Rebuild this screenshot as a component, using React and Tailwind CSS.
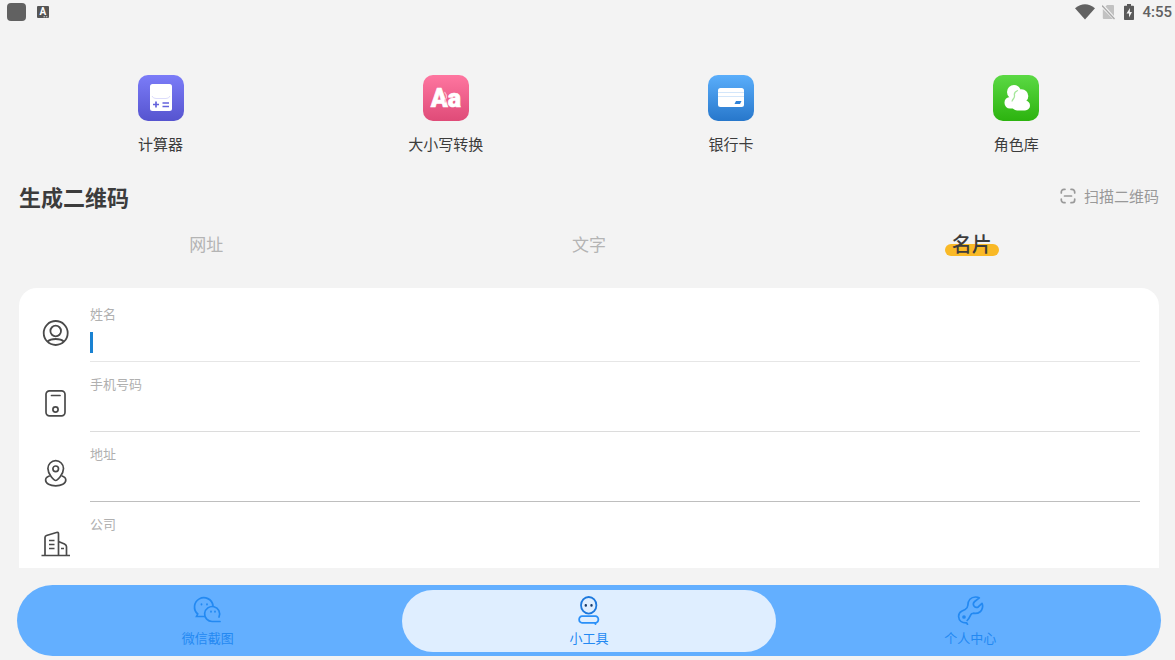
import { useState } from "react";

const CalculatorIcon = () => (
  <svg viewBox="0 0 46 46" className="w-[46px] h-[46px]" aria-hidden="true">
    <defs>
      <linearGradient id="calc" x1="0" y1="0" x2="0" y2="1">
        <stop offset="0" stopColor="#7b7cf8" />
        <stop offset="1" stopColor="#5654cf" />
      </linearGradient>
    </defs>
    <rect width="46" height="46" rx="10" fill="url(#calc)" />
    <rect x="12" y="9" width="22" height="27" rx="2.5" fill="#fff" />
    <path d="M14 21q1 2.5 4 2.5h10q3 0 4-2.5" fill="none" stroke="#dcdcfb" strokeWidth="1" />
    <path d="M18 26.500v6M15 29.500h6M24.500 28h6.500M24.500 31.500h6.500" stroke="#6463dc" strokeWidth="1.700" />
  </svg>
);

const CaseIcon = () => (
  <svg viewBox="0 0 46 46" className="w-[46px] h-[46px]" aria-hidden="true">
    <defs>
      <linearGradient id="case" x1="0" y1="0" x2="0" y2="1">
        <stop offset="0" stopColor="#fe76a0" />
        <stop offset="1" stopColor="#df4b78" />
      </linearGradient>
    </defs>
    <rect width="46" height="46" rx="10" fill="url(#case)" />
    <text
      x="23"
      y="32"
      textAnchor="middle"
      fill="#fff"
      stroke="#fff"
      strokeWidth=".6"
      className="font-[Roboto,sans-serif] font-black text-[25px]"
    >
      Aa
    </text>
    <path d="M21.500 17q2.500 3 2 5.500-2 2-1.200 5" fill="none" stroke="#fbb5ca" strokeWidth="1.200" />
  </svg>
);

const CardIcon = () => (
  <svg viewBox="0 0 46 46" className="w-[46px] h-[46px]" aria-hidden="true">
    <defs>
      <linearGradient id="bank" x1="0" y1="0" x2="0" y2="1">
        <stop offset="0" stopColor="#5aaefb" />
        <stop offset="1" stopColor="#2777cb" />
      </linearGradient>
    </defs>
    <rect width="46" height="46" rx="10" fill="url(#bank)" />
    <rect x="10" y="13" width="26" height="19" rx="2.500" fill="#fff" />
    <path d="M10 17.500h26M10 21.500h26" stroke="#d3e6fa" strokeWidth="1" />
    <path d="M28 26h5.500l-1.500 3h-5.500z" fill="#2f82d8" />
  </svg>
);

const RolesIcon = () => (
  <svg viewBox="0 0 46 46" className="w-[46px] h-[46px]" aria-hidden="true">
    <defs>
      <linearGradient id="roles" x1="0" y1="0" x2="0" y2="1">
        <stop offset="0" stopColor="#5bd944" />
        <stop offset="1" stopColor="#2cb30f" />
      </linearGradient>
    </defs>
    <rect width="46" height="46" rx="10" fill="url(#roles)" />
    <g fill="#fff">
      <circle cx="21" cy="17" r="7" />
      <rect x="11.500" y="22" width="16" height="11.500" rx="5.500" />
      <circle cx="28.500" cy="21" r="6.800" />
      <rect x="19" y="25.500" width="18" height="10" rx="5" />
      <path d="M17 21h10v12H17zM24 24h9v5h-9z" />
    </g>
    <path d="M25 15.500c-3 1-4 3-3.500 5 .5 3-2 3-2.500 6" fill="none" stroke="#a5e79b" strokeWidth="1.300" />
  </svg>
);

const PersonIcon = () => (
  <svg viewBox="0 0 28 28" className="w-7 h-7" fill="none" stroke="#4a4a4a" strokeWidth="1.800" aria-hidden="true">
    <circle cx="13.700" cy="14" r="12" />
    <circle cx="13.700" cy="12" r="5.300" />
    <path d="M5.700 22.500q2.500-2.500 8-2.500t8 2.500" />
  </svg>
);

const PhoneIcon = () => (
  <svg viewBox="0 0 28 28" className="w-7 h-7" fill="none" stroke="#4a4a4a" strokeWidth="1.700" aria-hidden="true">
    <rect x="4" y="1.800" width="19" height="25" rx="3.500" />
    <path d="M9.500 6.500h8.500" strokeLinecap="round" />
    <circle cx="13.500" cy="20.500" r="2.600" />
  </svg>
);

const PlaceIcon = () => (
  <svg viewBox="0 0 28 28" className="w-7 h-7" fill="none" stroke="#4a4a4a" strokeWidth="1.700" aria-hidden="true">
    <path d="M13.700 21.500c-1.500 0-7.800-6-7.800-12a7.800 7.800 0 0 1 15.600 0c0 6-6.300 12-7.800 12z" />
    <circle cx="13.700" cy="9.800" r="2.800" />
    <path d="M7.800 16.800c-3 1-4.200 2.500-4.200 4.200 0 3.500 4.500 5.800 10.100 5.800s10.100-2.300 10.100-5.800c0-1.700-1.200-3.200-4.200-4.200" />
  </svg>
);

const CompanyIcon = () => (
  <svg viewBox="0 0 28 28" className="w-7 h-7 overflow-visible" fill="none" stroke="#4a4a4a" strokeWidth="1.700" strokeLinejoin="round" aria-hidden="true">
    <path d="M-.5 26.500h28.500M3 26V8.500q0-1.500 1.500-2l10-3q2-.5 2 1.300V26M16.500 12.500l6 2.500q2 1 2 2.800V26" />
    <path d="M7 11.500h5.500M7 15.500h5.500M7 19.500h5.500M19 19.500h3" />
  </svg>
);

const ScanIcon = () => (
  <svg viewBox="0 0 16 16" className="w-4 h-4" fill="none" stroke="currentColor" strokeWidth="1.700" strokeLinecap="round" aria-hidden="true">
    <path d="M1.300 5V4A2.700 2.700 0 0 1 4 1.300H5M11 1.300h1A2.700 2.700 0 0 1 14.700 4v1M14.700 11v1a2.700 2.700 0 0 1-2.700 2.700H11M5 14.700H4A2.700 2.700 0 0 1 1.300 12v-1M4.500 8h7" />
  </svg>
);

const ChatIcon = () => (
  <svg viewBox="0 0 30 30" className="w-[30px] h-[30px]" fill="none" stroke="currentColor" strokeWidth="1.700" strokeLinecap="round" aria-hidden="true">
    <path d="M11 21.500H3.500l1.200-2.500A9.300 9.300 0 1 1 20 10.500" />
    <path d="M26 22A7.500 7.500 0 1 0 19.500 26.500h7.500" />
    <path d="M8.500 9.200v.4M14 9.200v.4M18 16.500v.3M22 16.500v.3" strokeWidth="1.800" />
  </svg>
);

const RobotIcon = () => (
  <svg viewBox="0 0 30 30" className="w-[30px] h-[30px]" fill="none" stroke="#1c78dd" strokeWidth="1.800" strokeLinecap="round" aria-hidden="true">
    <ellipse cx="14.700" cy="10.300" rx="7.700" ry="8.300" />
    <path d="M21.500 29l-.6-1.200H8A2.800 2.800 0 0 1 5.200 25v-1A2.800 2.800 0 0 1 8 21.200h13.500a2.800 2.800 0 0 1 2.800 2.800v1a2.800 2.800 0 0 1-1.800 2.600" stroke="#2b90f8" />
    <path d="M11.800 10.300v.2M17.500 10.300v.2" stroke="#183a68" strokeWidth="2.400" />
  </svg>
);

const WrenchIcon = () => (
  <svg viewBox="0 0 30 30" className="w-[30px] h-[30px]" fill="none" stroke="currentColor" strokeWidth="1.700" strokeLinecap="round" strokeLinejoin="round" aria-hidden="true">
    <path d="M12.500 29.300l-.8-1.500C7 28 3.800 25.500 3.600 21.500c0-2.500 1-4.300 3-5.300l3.500-1.700c1.800-1 2.500-2 2.700-4C13 5.500 15.800 2 20.500 2c1.800 0 3 .3 3.800.9l-4.600 3.600c-1.500 1.300-1.700 3-.7 4.500 1.200 1.700 3 1.800 4.500.7l3.500-3.400c.7 1.500.8 3.200.3 4.900-1 3.800-4.300 5.500-8.800 5l-2 .6c-1.500 1.500-1.500 4-4.300 6.700" />
    <circle cx="9" cy="22" r="1" fill="currentColor" />
  </svg>
);

const tools = [
  { name: "计算器", icon: <CalculatorIcon /> },
  { name: "大小写转换", icon: <CaseIcon /> },
  { name: "银行卡", icon: <CardIcon /> },
  { name: "角色库", icon: <RolesIcon /> },
];

const tabs = ["网址", "文字", "名片"];

const fields = [
  { id: "name", label: "姓名", icon: <PersonIcon />, line: "border-[#e6e6e6]" },
  { id: "phone", label: "手机号码", icon: <PhoneIcon />, line: "border-[#dcdcdc]" },
  { id: "address", label: "地址", icon: <PlaceIcon />, line: "border-[#bebebe]" },
  { id: "company", label: "公司", icon: <CompanyIcon />, line: "border-[#dcdcdc]" },
];

const navItems = [
  { name: "微信截图", icon: <ChatIcon /> },
  { name: "小工具", icon: <RobotIcon /> },
  { name: "个人中心", icon: <WrenchIcon /> },
];

const StatusBar = () => (
  <div className="flex items-center justify-between h-6 pl-[7px] pr-[3px] text-[#616161]">
    <div className="flex items-center gap-[11px]">
      <span className="w-[19px] h-[18px] rounded bg-[#616161]" />
      <svg viewBox="0 0 12 12" className="w-3 h-3" aria-hidden="true">
        <rect width="12" height="12" rx="1" fill="#555" />
        <text x="2.500" y="9" fill="#fff" className="font-[Roboto,sans-serif] font-bold text-[10px]">A</text>
        <path d="M6.500 10.800h4" stroke="#ddd" strokeWidth="1" strokeDasharray="1.500 .8" />
      </svg>
    </div>
    <div className="flex items-center gap-[7px]">
      <svg viewBox="0 0 20 16" className="w-5 h-4" aria-hidden="true">
        <path d="M0 4.200Q10-3.600 20 4.200L10 15.500z" fill="#616161" />
      </svg>
      <svg viewBox="0 0 14 16" className="w-[14px] h-4" aria-hidden="true">
        <path d="M5 1h6q1 0 1 1v10L3.500 2.500zM.8 5L11 15H1.800q-1 0-1-1z" fill="#c2c2c2" />
        <path d="M0 1.500L12.500 15" stroke="#a8a8a8" strokeWidth="1.200" />
      </svg>
      <svg viewBox="0 0 12 16" className="w-3 h-4" aria-hidden="true">
        <path d="M4 0h4v1.800h2.200q.8 0 .8.800v12.600q0 .8-.8.800H1.800Q1 16 1 15.200V2.600q0-.8.8-.8H4z" fill="#5a5a5a" />
        <path d="M7 4L3.500 9.500H6V13.500L9 8H6.800z" fill="#f3f3f3" />
      </svg>
      <span className="font-[Roboto,sans-serif] font-medium text-[15px] leading-6">4:55</span>
    </div>
  </div>
);

const App = () => {
  const [tab, setTab] = useState("名片");
  const [page, setPage] = useState("小工具");
  const [active, setActive] = useState("name");
  const [values, setValues] = useState({});

  return (
    <div className="flex flex-col h-screen overflow-hidden bg-[#f3f3f3] text-[#3c3c3c] font-['Noto_Sans_CJK_SC',sans-serif]">
      <StatusBar />

      {/* Tools */}
      <div className="grid grid-cols-4 pl-[18px] pr-4 pt-[51px]">
        {tools.map((tool) => (
          <button key={tool.name} className="flex flex-col items-center gap-[11px]">
            {tool.icon}
            <span className="text-[15px] leading-6">{tool.name}</span>
          </button>
        ))}
      </div>

      {/* Section title */}
      <div className="flex items-center justify-between pl-[19px] pr-4 pt-6">
        <h1 className="text-[22px] leading-8 font-bold">生成二维码</h1>
        <button className="flex items-center gap-2 text-[15px] leading-8 text-[#999999]">
          <ScanIcon />
          扫描二维码
        </button>
      </div>

      {/* Tabs */}
      <div className="grid grid-cols-3 pl-[15px] pr-3 pt-4">
        {tabs.map((t) => (
          <button
            key={t}
            onClick={() => setTab(t)}
            className="flex items-center justify-center h-8"
          >
            {t === tab ? (
              <span className="relative px-[7px] text-[20px] leading-8 font-medium">
                <span className="absolute inset-x-0 bottom-1 h-3 rounded-full bg-[#f9b926]" />
                <span className="relative">{t}</span>
              </span>
            ) : (
              <span className="text-[17px] leading-8 text-[#b4b4b4]">{t}</span>
            )}
          </button>
        ))}
      </div>

      {/* Card form */}
      <form className="flex flex-col flex-1 min-h-0 overflow-hidden gap-3 mt-7 mr-4 ml-[19px] pt-4 pl-[23px] pr-[19px] rounded-t-[18px] bg-white">
        {fields.map((f) => (
          <div key={f.id} className="flex items-center gap-5 h-[58px] shrink-0">
            {f.icon}
            <div className={`flex flex-col flex-1 h-full border-b ${f.line}`}>
              <label htmlFor={f.id} className="text-[13px] leading-5 text-[#b0b0b0]">
                {f.label}
              </label>
              <div className="flex items-center flex-1">
                {active === f.id && !values[f.id] && (
                  <span className="w-[3px] h-[21px] bg-[#1a82d2]" />
                )}
                <input
                  id={f.id}
                  type="text"
                  value={values[f.id] || ""}
                  onFocus={() => setActive(f.id)}
                  onChange={(e) => setValues({ ...values, [f.id]: e.target.value })}
                  className="flex-1 h-6 text-base outline-none caret-[#1a82d2]"
                />
              </div>
            </div>
          </div>
        ))}
      </form>

      {/* Bottom navigation */}
      <nav className="grid grid-cols-3 h-[71px] shrink-0 mt-[17px] mb-1 mr-[14px] ml-[17px] rounded-full bg-[#63afff]">
        {navItems.map((item) => (
          <button
            key={item.name}
            onClick={() => setPage(item.name)}
            className={`flex flex-col items-center justify-center gap-[3px] mt-[5px] mx-1 mb-1 rounded-full text-[#2389f2] ${
              page === item.name ? "bg-[#dfeeff]" : ""
            }`}
          >
            {item.icon}
            <span className="text-[13px] leading-5">{item.name}</span>
          </button>
        ))}
      </nav>
    </div>
  );
};

export default App;
